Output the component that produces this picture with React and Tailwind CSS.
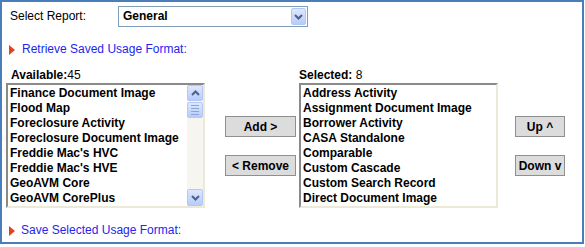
import React from "react";

const avail = [
  "Finance Document Image",
  "Flood Map",
  "Foreclosure Activity",
  "Foreclosure Document Image",
  "Freddie Mac's HVC",
  "Freddie Mac's HVE",
  "GeoAVM Core",
  "GeoAVM CorePlus",
];
const sel = [
  "Address Activity",
  "Assignment Document Image",
  "Borrower Activity",
  "CASA Standalone",
  "Comparable",
  "Custom Cascade",
  "Custom Search Record",
  "Direct Document Image",
];

function Chevron({ up }) {
  return (
    <svg width="9" height="6" viewBox="0 0 9 6">
      <polyline
        points={up ? "1,5 4.5,1.5 8,5" : "1,1 4.5,4.5 8,1"}
        fill="none"
        stroke="#4d6185"
        strokeWidth="2"
      />
    </svg>
  );
}

function XPBtn({ children, className }) {
  return (
    <div
      className={`flex items-center justify-center rounded-[2px] border border-[#b4c8f6] bg-linear-to-b from-[#dde7ff] to-[#b7ccfb] ${className}`}
    >
      {children}
    </div>
  );
}

function Triangle() {
  return (
    <svg width="6" height="10" viewBox="0 0 6 10">
      <polygon points="0,0 6,5 0,10" fill="#e2421f" />
    </svg>
  );
}

function ListBox({ items, scroll }) {
  return (
    <div className="w-[199px] h-[125px] border-2 border-t-[#8a8a8a] border-l-[#8a8a8a] border-r-[#ece9d8] border-b-[#ece9d8] bg-white flex overflow-hidden">
      <div className="flex-1 pt-[1px] pl-[2px]">
        {items.map((t) => (
          <div key={t} className="h-[15px] leading-[15px] font-bold whitespace-nowrap">
            {t}
          </div>
        ))}
      </div>
      {scroll && (
        <div className="w-[16px] bg-[#f6f5f0] flex flex-col pt-0 pb-0">
          <XPBtn className="w-[16px] h-[16px]">
            <Chevron up />
          </XPBtn>
          <XPBtn className="w-[16px] h-[16px] mt-[1px] flex-col gap-[2px]">
            <div className="w-[8px] h-[1px] bg-[#8ea4d6]" />
            <div className="w-[8px] h-[1px] bg-[#8ea4d6]" />
            <div className="w-[8px] h-[1px] bg-[#8ea4d6]" />
            <div className="w-[8px] h-[1px] bg-[#8ea4d6]" />
          </XPBtn>
          <div className="flex-1" />
          <XPBtn className="w-[16px] h-[17px]">
            <Chevron />
          </XPBtn>
        </div>
      )}
    </div>
  );
}

function GrayBtn({ children, w }) {
  return (
    <div
      className={`${w} h-[21px] border border-[#8f8f8f] bg-[#dcdcdc] flex items-center justify-center font-bold leading-none`}
    >
      {children}
    </div>
  );
}

export default function App() {
  return (
    <div className="w-[584px] h-[244px] border-2 border-[#4a7ebb] bg-white text-[12px] text-black font-['Liberation_Sans',Arial,sans-serif] flex flex-col">
      <div className="flex items-center mt-[4px] h-[21px]">
        <span className="ml-[8px] w-[108px] leading-[15px]">Select Report:</span>
        <div className="w-[190px] h-[21px] border border-[#7f9db9] bg-white flex items-center justify-between">
          <span className="pl-[4px] font-bold leading-[15px]">General</span>
          <XPBtn className="w-[15px] h-[17px] mr-[1px]">
            <Chevron />
          </XPBtn>
        </div>
      </div>

      <div className="flex items-center mt-[15px] h-[15px] ml-[7px] gap-[7px]">
        <Triangle />
        <span className="leading-[15px] text-[#2424ee]">Retrieve Saved Usage Format:</span>
      </div>

      <div className="flex mt-[11px] ml-[4px] items-start">
        <div className="flex flex-col">
          <div className="h-[15px] leading-[15px] pl-[5px]">
            <span className="font-bold">Available:</span>45
          </div>
          <ListBox items={avail} scroll />
        </div>
        <div className="ml-[20px] pt-[48px] flex flex-col gap-[18px]">
          <GrayBtn w="w-[71px]">Add &gt;</GrayBtn>
          <GrayBtn w="w-[71px]">&lt; Remove</GrayBtn>
        </div>
        <div className="ml-[3px] flex flex-col">
          <div className="h-[15px] leading-[15px]">
            <span className="font-bold">Selected:</span> 8
          </div>
          <ListBox items={sel} />
        </div>
        <div className="ml-[17px] pt-[48px] flex flex-col gap-[18px]">
          <GrayBtn w="w-[50px]">Up ^</GrayBtn>
          <GrayBtn w="w-[50px]">Down v</GrayBtn>
        </div>
      </div>

      <div className="flex items-center mt-[15px] h-[15px] ml-[7px] gap-[6px]">
        <Triangle />
        <span className="leading-[15px] text-[#2424ee]">Save Selected Usage Format:</span>
      </div>
    </div>
  );
}
